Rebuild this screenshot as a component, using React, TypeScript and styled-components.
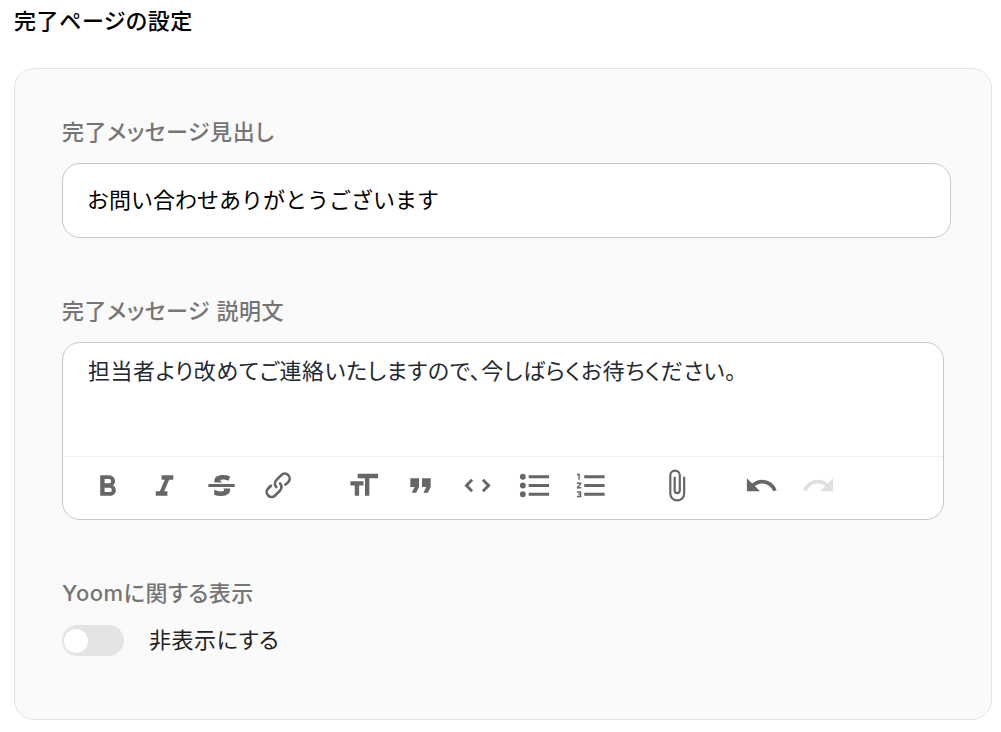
import React, { useState } from "react";
import styled, { createGlobalStyle } from "styled-components";

const GlobalStyle = createGlobalStyle`
  *, *::before, *::after { box-sizing: border-box; }
  body {
    margin: 0;
    background: #fff;
    color: #000;
    font-family: Inter, "Noto Sans CJK JP", sans-serif;
    font-size: 22px;
    line-height: 30px;
    font-feature-settings: "palt";
    letter-spacing: 0.025em;
  }
  input, textarea, button { font: inherit; letter-spacing: inherit; }
`;

const Page = styled.main`
  padding: 6px 9px 12px 14px;
`;

const Title = styled.h1`
  margin: 0 0 32px;
  font-size: 22px;
  line-height: 30px;
  font-weight: 500;
`;

const Card = styled.section`
  display: flex;
  flex-direction: column;
  padding: 48px 40px 63px 47px;
  border: 1px solid #e3e3e3;
  border-radius: 20px;
  background: #fafafa;
`;

const Field = styled.div<{ $gapAfter?: number }>`
  display: flex;
  flex-direction: column;
  gap: 16px;
  margin-bottom: ${(p) => p.$gapAfter ?? 0}px;
`;

const Label = styled.label`
  color: #757575;
  font-weight: 500;
`;

const TextInput = styled.input`
  width: 100%;
  height: 75px;
  padding: 0 24px 6px;
  border: 1px solid #c8c8c8;
  border-radius: 18px;
  background: #fff;
  color: #000;
  font-family: "Noto Sans CJK JP", sans-serif;
  letter-spacing: 0;
  font-feature-settings: normal;
  outline: none;
`;

const Editor = styled.div`
  margin-right: 7px;
  border: 1px solid #c8c8c8;
  border-radius: 18px;
  background: #fff;
  overflow: hidden;
`;

const EditorText = styled.textarea`
  display: block;
  width: 100%;
  height: 113px;
  padding: 13px 25px;
  border: 0;
  background: transparent;
  color: #24292f;
  font-feature-settings: "palt";
  resize: none;
  outline: none;
`;

const Toolbar = styled.div`
  display: flex;
  gap: 28px;
  padding: 0 16px 5px;
  border-top: 1px solid #f0f0f0;
`;

const ToolGroup = styled.div`
  display: flex;
`;

const ToolButton = styled.button`
  display: flex;
  align-items: center;
  justify-content: center;
  width: 57px;
  height: 57px;
  padding: 0;
  border: 0;
  background: none;
  color: #666;
  &:disabled { color: #e0e0e0; }
`;

const ToggleRow = styled.label`
  display: flex;
  align-items: center;
  gap: 25px;
  min-height: 32px;
  color: #222;
`;

const Switch = styled.input`
  appearance: none;
  width: 62px;
  height: 31px;
  margin: 0;
  padding: 4px 2px;
  border-radius: 16px;
  background: #e4e4e4;
  &::before {
    content: "";
    display: block;
    width: 24px;
    height: 24px;
    border-radius: 50%;
    background: #fff;
  }
  &:checked { background: #8a8a8a; }
  &:checked::before { margin-left: auto; }
`;

type Tool = { name: string; path: string; disabled?: boolean };

const toolGroups: Tool[][] = [
  [
    { name: "太字", path: "M15.6 11.8c1-.7 1.6-1.8 1.6-2.8a4 4 0 0 0-4-4H7v14h7c2.1 0 3.7-1.7 3.7-3.8 0-1.5-.8-2.8-2.1-3.4zM10 7.5h3a1.5 1.5 0 1 1 0 3h-3v-3zm3.5 9H10v-3h3.5a1.5 1.5 0 1 1 0 3z" },
    { name: "斜体", path: "M10 5v3h2.2l-3.4 8H6v3h8v-3h-2.2l3.4-8H18V5h-8z" },
    { name: "取り消し線", path: "M12.73 14l.28.14c.26.15.45.3.57.44.12.14.18.3.18.5 0 .3-.15.56-.44.75-.3.2-.76.3-1.39.3A13.52 13.52 0 0 1 7 14.95v3.37a10.64 10.64 0 0 0 4.84.88c1.26 0 2.35-.19 3.28-.56.93-.37 1.64-.9 2.14-1.57s.74-1.45.74-2.32c0-.26-.02-.51-.06-.75h-5.21zm-5.5-4c-.08-.34-.12-.7-.12-1.1 0-1.29.52-2.3 1.58-3.02 1.05-.72 2.5-1.08 4.34-1.08 1.62 0 3.28.34 4.97 1l-1.3 2.93c-1.47-.6-2.73-.9-3.8-.9-.55 0-.96.08-1.2.26-.26.17-.38.38-.38.64 0 .27.16.52.48.74.17.12.53.3 1.05.53H7.23zM3 13h18v-2H3v2z" },
    { name: "リンク", path: "M9.88 13.7a4.3 4.3 0 0 1 0-6.07l3.37-3.37a4.26 4.26 0 0 1 6.07 0 4.3 4.3 0 0 1 0 6.06l-1.96 1.72a.91.91 0 1 1-1.3-1.3l1.97-1.71a2.46 2.46 0 0 0-3.48-3.48l-3.38 3.37a2.46 2.46 0 0 0 0 3.48.91.91 0 1 1-1.3 1.3zM4.25 19.46a4.3 4.3 0 0 1 0-6.07l1.93-1.9a.91.91 0 1 1 1.3 1.3l-1.93 1.9a2.46 2.46 0 0 0 3.48 3.48l3.37-3.38c.96-.96.96-2.52 0-3.48a.91.91 0 1 1 1.3-1.3 4.3 4.3 0 0 1 0 6.07l-3.38 3.38a4.26 4.26 0 0 1-6.07 0z" },
  ],
  [
    { name: "見出し", path: "M12 9v3H9v7H6v-7H3V9h9zM8 4h14v3h-6v12h-3V7H8V4z" },
    { name: "引用", path: "M6 17h3l2-4V7H5v6h3zm8 0h3l2-4V7h-6v6h3z" },
    { name: "コード", path: "M18.2 12L15 15.2l1.4 1.4L21 12l-4.6-4.6L15 8.8l3.2 3.2zM5.8 12L9 8.8 7.6 7.4 3 12l4.6 4.6L9 15.2 5.8 12z" },
    { name: "箇条書き", path: "M4 4a2 2 0 1 0 0 4 2 2 0 0 0 0-4zm0 6a2 2 0 1 0 0 4 2 2 0 0 0 0-4zm0 6a2 2 0 1 0 0 4 2 2 0 0 0 0-4zm4 3h14v-2H8v2zm0-6h14v-2H8v2zm0-8v2h14V5H8z" },
    { name: "番号付きリスト", path: "M2 17h2v.5H3v1h1v.5H2v1h3v-4H2v1zm1-9h1V4H2v1h1v3zm-1 3h1.8L2 13.1v.9h3v-1H3.2L5 10.9V10H2v1zm5-6v2h14V5H7zm0 14h14v-2H7v2zm0-6h14v-2H7v2z" },
  ],
  [
    { name: "ファイルを添付", path: "M16.5 6v11.5a4 4 0 1 1-8 0V5a2.5 2.5 0 0 1 5 0v10.5a1 1 0 1 1-2 0V6H10v9.5a2.5 2.5 0 0 0 5 0V5a4 4 0 1 0-8 0v12.5a5.5 5.5 0 0 0 11 0V6h-1.5z" },
  ],
  [
    { name: "元に戻す", path: "M12.5 8c-2.6 0-5 1-6.9 2.6L2 7v9h9l-3.6-3.6A8 8 0 0 1 20 16l2.4-.8a10.5 10.5 0 0 0-10-7.2z" },
    { name: "やり直す", path: "M18.4 10.6a10.5 10.5 0 0 0-16.9 4.6L4 16a8 8 0 0 1 12.7-3.6L13 16h9V7l-3.6 3.6z", disabled: true },
  ],
];

export default function App() {
  const [heading, setHeading] = useState("お問い合わせありがとうございます");
  const [body, setBody] = useState("担当者より改めてご連絡いたしますので、今しばらくお待ちください。");
  const [hidden, setHidden] = useState(false);

  return (
    <>
      <GlobalStyle />
      <Page>
        <Title>完了ページの設定</Title>
        <Card>
          <Field $gapAfter={58}>
            <Label htmlFor="heading">完了メッセージ見出し</Label>
            <TextInput id="heading" value={heading} onChange={(e) => setHeading(e.target.value)} />
          </Field>
          <Field $gapAfter={58}>
            <Label htmlFor="body">完了メッセージ 説明文</Label>
            <Editor>
              <EditorText id="body" value={body} onChange={(e) => setBody(e.target.value)} />
              <Toolbar role="toolbar">
                {toolGroups.map((group, i) => (
                  <ToolGroup key={i}>
                    {group.map((tool) => (
                      <ToolButton key={tool.name} type="button" aria-label={tool.name} disabled={tool.disabled}>
                        <svg width="35" height="35" viewBox="0 0 24 24" fill="currentColor" aria-hidden="true">
                          <path d={tool.path} />
                        </svg>
                      </ToolButton>
                    ))}
                  </ToolGroup>
                ))}
              </Toolbar>
            </Editor>
          </Field>
          <Field>
            <Label htmlFor="hide-brand">Yoomに関する表示</Label>
            <ToggleRow>
              <Switch id="hide-brand" type="checkbox" checked={hidden} onChange={(e) => setHidden(e.target.checked)} />
              非表示にする
            </ToggleRow>
          </Field>
        </Card>
      </Page>
    </>
  );
}
